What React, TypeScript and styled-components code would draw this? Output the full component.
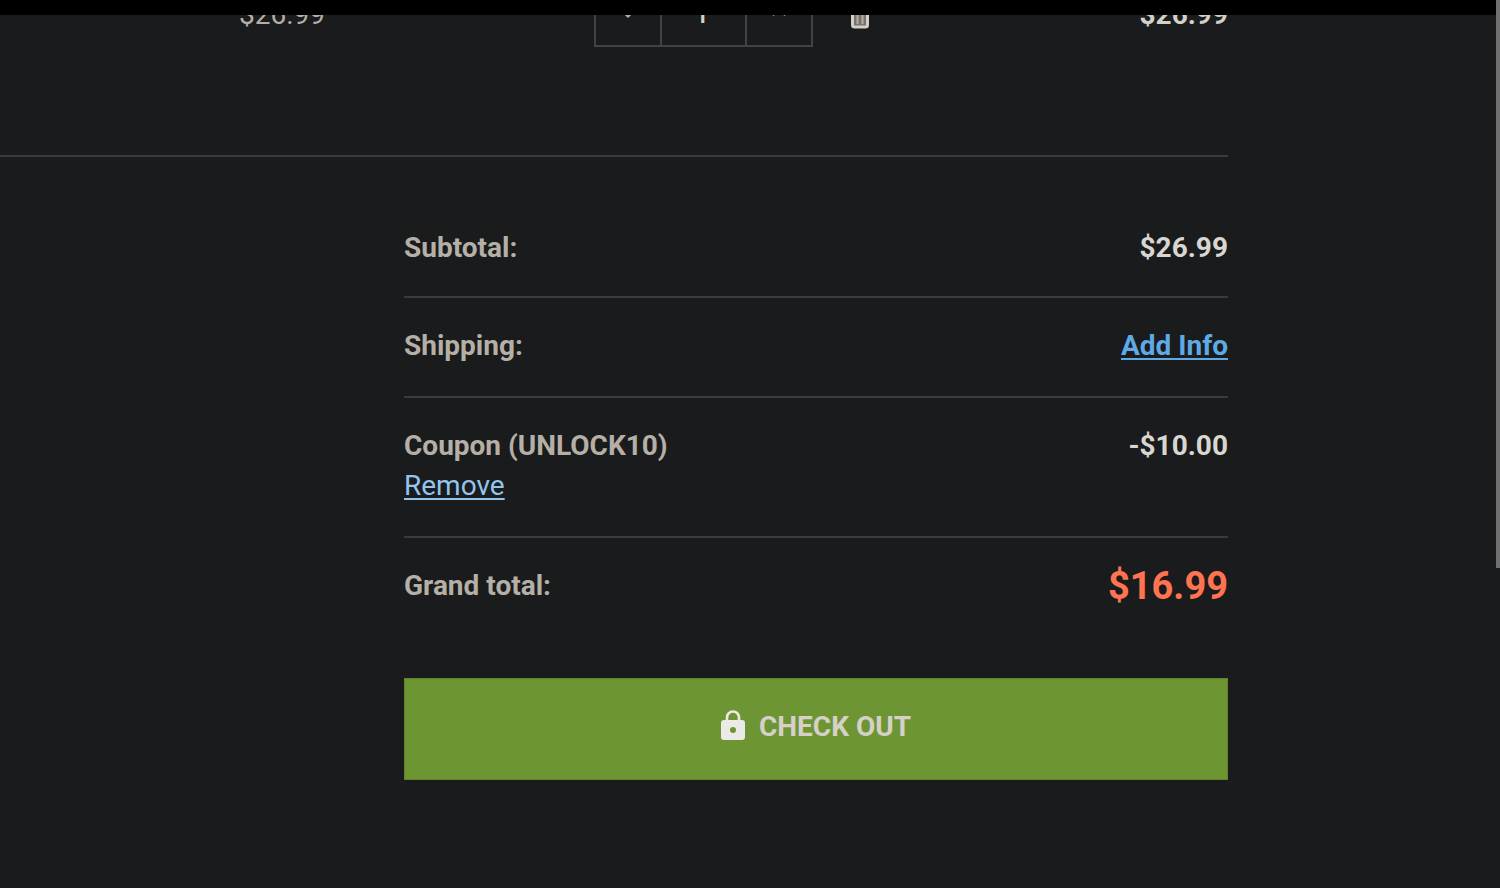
import React from 'react';
import styled, { createGlobalStyle } from 'styled-components';

const GlobalStyle = createGlobalStyle`
  * { box-sizing: border-box; }
  body {
    margin: 0;
    background: #191b1c;
    color: #b5afa6;
    font-family: Roboto, "Liberation Sans", sans-serif;
    font-size: 28px;
    line-height: 40px;
    overflow: hidden;
  }
`;

const Page = styled.div`
  position: relative;
  min-height: 100vh;
`;

const TopBar = styled.header`
  height: 15px;
  background: #000;
`;

const Main = styled.main`
  padding-right: 272px;
`;

const CartItem = styled.section`
  display: flex;
  align-items: flex-end;
  justify-content: space-between;
  height: 32px;
  padding-left: 239px;
  overflow: hidden;
`;

const Price = styled.span<{ $bold?: boolean }>`
  padding-bottom: 12px;
  font-weight: ${(p) => (p.$bold ? 700 : 400)};
  color: ${(p) => (p.$bold ? '#d3cfc9' : '#b5afa6')};
`;

const ItemControls = styled.div`
  display: flex;
  align-items: flex-end;
  gap: 37px;
`;

const Stepper = styled.div`
  display: flex;
  height: 68px;
  border: 2px solid #414446;
`;

const StepButton = styled.button`
  display: flex;
  align-items: center;
  justify-content: center;
  width: 64px;
  padding: 0;
  border: 0;
  background: none;
  color: #b5afa6;
`;

const Quantity = styled.input`
  width: 87px;
  padding: 2px 4px 0 0;
  border: 2px solid #414446;
  border-width: 0 2px;
  background: none;
  color: #d3cfc9;
  font: 500 26px Roboto, sans-serif;
  text-align: center;
`;

const TrashButton = styled.button`
  display: flex;
  padding: 0 0 18px;
  border: 0;
  background: none;
  color: #d3cfc9;
`;

const Divider = styled.hr`
  margin: 108px 0 0;
  border: 0;
  border-top: 2px solid #393c3e;
`;

const Summary = styled.section`
  margin: 43px 0 0 404px;
`;

const Row = styled.div`
  display: flex;
  justify-content: space-between;
  padding: 28px 0 30px;
  border-bottom: 2px solid #393c3e;
  font-weight: 700;

  &:first-child { padding-bottom: 28px; }
  &:last-of-type { border-bottom: 0; }
`;

const Label = styled.div``;

const Amount = styled.div<{ $total?: boolean }>`
  color: ${(p) => (p.$total ? '#ff7350' : '#d9d6d1')};
  font-size: ${(p) => (p.$total ? 38 : 28)}px;
`;

const TextLink = styled.a<{ $light?: boolean }>`
  display: block;
  width: fit-content;
  color: ${(p) => (p.$light ? '#94c3ee' : '#5fa9e4')};
  font-weight: ${(p) => (p.$light ? 400 : 700)};
  text-decoration: underline;
  text-decoration-thickness: 2px;
  text-underline-offset: 3px;
`;

const CheckoutButton = styled.button`
  display: flex;
  align-items: center;
  justify-content: center;
  gap: 14px;
  width: 100%;
  height: 102px;
  margin-top: 42px;
  padding: 0 0 5px;
  border: 1px solid #5f842a;
  background: #6e9534;
  color: #d5d0c8;
  font: 700 28px Roboto, sans-serif;
`;

const ScrollThumb = styled.div`
  position: absolute;
  top: 0;
  right: 0;
  width: 4px;
  height: 64vh;
  background: #707070;
`;

const Chevron = ({ up = false }: { up?: boolean }) => (
  <svg width="18" height="12" viewBox="0 0 18 12" fill="none" stroke="currentColor" strokeWidth="3">
    <path d={up ? 'M2.5 8 9 1.5l6.5 6.5' : 'M2 2l7 7 7-7'} />
  </svg>
);

const TrashIcon = () => (
  <svg width="20" height="26" viewBox="0 0 20 26" fill="none" stroke="currentColor">
    <path d="M0 4h20M6 3V1h8v2" strokeWidth="2" />
    <path d="M2.5 7v15q0 2 2 2h11q2 0 2-2V7z" fill="#77736c" strokeWidth="3" />
    <path d="M7.5 9v12M12.5 9v12" stroke="#b5afa6" strokeWidth="2" />
  </svg>
);

const LockIcon = () => (
  <svg width="24" height="34" viewBox="0 0 24 34" fill="none">
    <path d="M6 12V7.5a6 6 0 0 1 12 0V12" stroke="#eceae6" strokeWidth="2.6" />
    <path
      fill="#eceae6"
      fillRule="evenodd"
      d="M3 10h18a3 3 0 0 1 3 3v14a3 3 0 0 1-3 3H3a3 3 0 0 1-3-3V13a3 3 0 0 1 3-3Zm9 7a3 3 0 1 0 0 6 3 3 0 0 0 0-6Z"
    />
  </svg>
);

export default function App() {
  return (
    <>
      <GlobalStyle />
      <Page>
        <TopBar />
        <Main>
          <CartItem>
            <Price>$26.99</Price>
            <ItemControls>
              <Stepper>
                <StepButton aria-label="Decrease quantity"><Chevron /></StepButton>
                <Quantity aria-label="Quantity" defaultValue="1" />
                <StepButton aria-label="Increase quantity"><Chevron up /></StepButton>
              </Stepper>
              <TrashButton aria-label="Delete item"><TrashIcon /></TrashButton>
            </ItemControls>
            <Price $bold>$26.99</Price>
          </CartItem>
          <Divider />
          <Summary>
            <Row>
              <Label>Subtotal:</Label>
              <Amount>$26.99</Amount>
            </Row>
            <Row>
              <Label>Shipping:</Label>
              <TextLink href="#shipping">Add Info</TextLink>
            </Row>
            <Row>
              <Label>
                Coupon (UNLOCK10)
                <TextLink href="#remove" $light>Remove</TextLink>
              </Label>
              <Amount>-$10.00</Amount>
            </Row>
            <Row>
              <Label>Grand total:</Label>
              <Amount $total>$16.99</Amount>
            </Row>
            <CheckoutButton>
              <LockIcon />
              CHECK OUT
            </CheckoutButton>
          </Summary>
        </Main>
        <ScrollThumb />
      </Page>
    </>
  );
}
